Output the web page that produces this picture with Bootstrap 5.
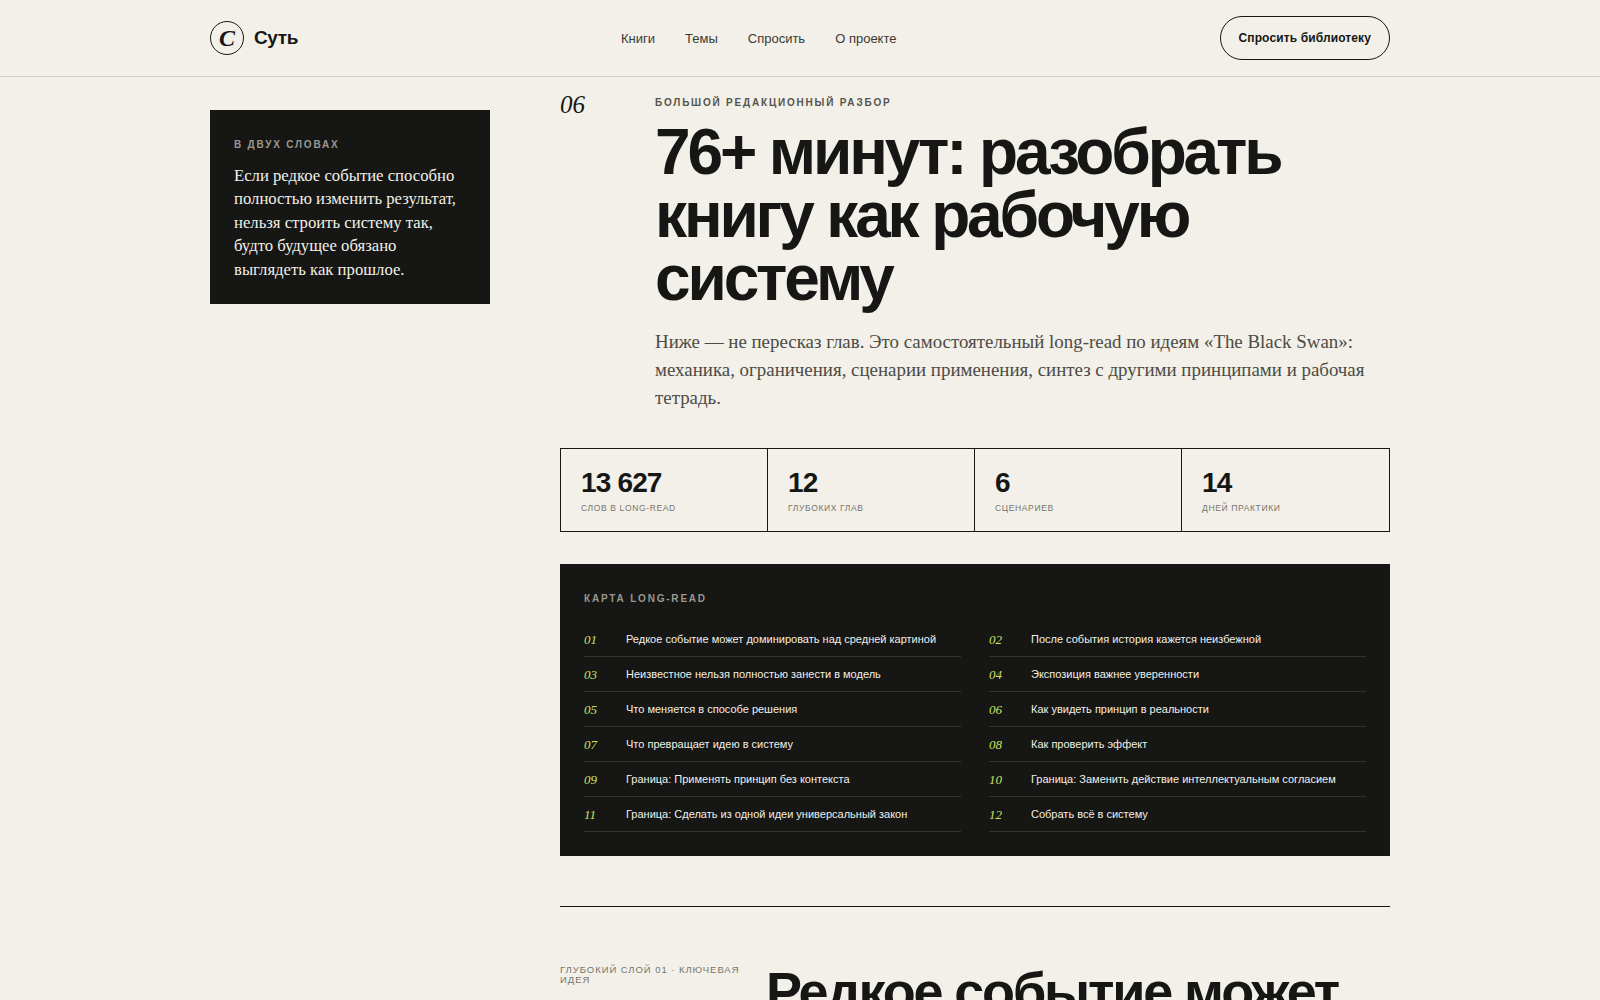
<!DOCTYPE html>
<html lang="ru">

<head>
    <meta charset="UTF-8">
    <title>Суть</title>
    <link href="https://cdn.jsdelivr.net/npm/bootstrap@5.3.0/dist/css/bootstrap.min.css" rel="stylesheet">
    <style>
        html, body { height: 1000px; overflow: hidden; }
        body { background: #f2f0e8; color: #161614; font-family: "Liberation Sans", Arial, sans-serif; }
        .wrap { width: 1180px; margin: 0 auto; }
        .site-head { height: 77px; border-bottom: 1px solid #cfccc4; }
        .logo-mark { width: 34px; height: 34px; border: 1px solid #161614; border-radius: 50%; font: italic 700 24px/30px "Liberation Serif", serif; }
        .logo-name { font-size: 19px; font-weight: 700; letter-spacing: -.02em; margin-left: 2px; }
        .head-links { gap: 30px; margin-left: 323px; padding-top: 1px; }
        .head-links a { font-size: 13px; color: #3b3a35; text-decoration: none; }
        .ask-btn { height: 44px; padding: 0 18px; border: 1px solid #161614; border-radius: 22px; font-size: 12px; font-weight: 700; color: #161614; letter-spacing: .01em; }
        .page-cols { gap: 70px; }
        .side-col { width: 280px; flex: none; padding-top: 33px; }
        .brief-box { background: #161614; color: #f2f0e8; padding: 25px 24px 0; height: 194px; }
        .brief-label { font-size: 10px; font-weight: 700; letter-spacing: .18em; color: #9a988f; line-height: 20px; margin-bottom: 9px; }
        .brief-text { font: 16.7px/23.4px "Liberation Serif", serif; margin: 0; }
        .main-col { width: 830px; flex: none; padding-top: 17px; }
        .chap-num { width: 95px; flex: none; font: italic 400 25px/22px "Liberation Serif", serif; }
        .chap-kicker { font-size: 10px; font-weight: 700; letter-spacing: .18em; color: #57554e; line-height: 18px; }
        .chap-title { font-size: 64px; font-weight: 700; letter-spacing: -.049em; line-height: 63px; margin: 9px 0 0; }
        .chap-lead { font: 18.9px/28px "Liberation Serif", serif; color: #4d4b45; margin: 18px 0 0; }
        .stat-row { border: 1px solid #161614; height: 84px; margin-top: 36px; display: grid; grid-template-columns: repeat(4, 1fr); }
        .stat-cell { padding: 20px 20px 0; border-right: 1px solid #161614; }
        .stat-cell:last-child { border-right: 0; }
        .stat-num { font-size: 28px; font-weight: 700; letter-spacing: -.03em; line-height: 28px; }
        .stat-label { font-size: 8.5px; letter-spacing: .075em; color: #77756c; text-transform: uppercase; line-height: 12px; margin-top: 5px; }
        .map-box { background: #161614; color: #f2f0e8; padding: 25px 24px 0; height: 292px; margin-top: 32px; }
        .map-label { font-size: 10px; font-weight: 700; letter-spacing: .18em; color: #9a988f; line-height: 20px; margin-bottom: 13px; }
        .map-grid { display: grid; grid-template-columns: 1fr 1fr; column-gap: 28px; }
        .map-row { height: 35px; padding-top: 1px; border-bottom: 1px solid #34342f; font-size: 11px; }
        .map-num { width: 42px; flex: none; font: italic 13px/13px "Liberation Serif", serif; color: #c9e265; }
        .sect-rule { height: 1px; background: #161614; margin-top: 50px; }
        .deep-row { margin-top: 57px; gap: 26px; }
        .deep-label { width: 180px; flex: none; font-size: 9.5px; letter-spacing: .1em; line-height: 10px; color: #77756c; padding-top: 1px; }
        .deep-title { font-size: 54px; font-weight: 700; letter-spacing: -.04em; line-height: 54px; margin: 0; white-space: nowrap; }
    </style>
</head>

<body>
    <header class="site-head">
        <div class="wrap h-100 d-flex align-items-center">
            <div class="d-flex align-items-center gap-2">
                <span class="logo-mark d-flex align-items-center justify-content-center">C</span>
                <span class="logo-name">Суть</span>
            </div>
            <nav class="head-links d-flex">
                <a href="#">Книги</a>
                <a href="#">Темы</a>
                <a href="#">Спросить</a>
                <a href="#">О проекте</a>
            </nav>
            <div class="ask-btn d-flex align-items-center ms-auto">Спросить библиотеку</div>
        </div>
    </header>

    <div class="wrap d-flex page-cols">
        <aside class="side-col">
            <div class="brief-box">
                <div class="brief-label">В ДВУХ СЛОВАХ</div>
                <p class="brief-text">Если редкое событие способно полностью изменить результат, нельзя строить систему так, будто будущее обязано выглядеть как прошлое.</p>
            </div>
        </aside>

        <main class="main-col">
            <div class="d-flex">
                <div class="chap-num">06</div>
                <div>
                    <div class="chap-kicker">БОЛЬШОЙ РЕДАКЦИОННЫЙ РАЗБОР</div>
                    <h1 class="chap-title">76+ минут: разобрать книгу как рабочую систему</h1>
                    <p class="chap-lead">Ниже — не пересказ глав. Это самостоятельный long-read по идеям «The Black Swan»: механика, ограничения, сценарии применения, синтез с другими принципами и рабочая тетрадь.</p>
                </div>
            </div>

            <div class="stat-row">
                <div class="stat-cell"><div class="stat-num">13 627</div><div class="stat-label">Слов в long-read</div></div>
                <div class="stat-cell"><div class="stat-num">12</div><div class="stat-label">Глубоких глав</div></div>
                <div class="stat-cell"><div class="stat-num">6</div><div class="stat-label">Сценариев</div></div>
                <div class="stat-cell"><div class="stat-num">14</div><div class="stat-label">Дней практики</div></div>
            </div>

            <section class="map-box">
                <div class="map-label">КАРТА LONG-READ</div>
                <div class="map-grid">
                    <div class="map-row d-flex align-items-center"><span class="map-num">01</span>Редкое событие может доминировать над средней картиной</div>
                    <div class="map-row d-flex align-items-center"><span class="map-num">02</span>После события история кажется неизбежной</div>
                    <div class="map-row d-flex align-items-center"><span class="map-num">03</span>Неизвестное нельзя полностью занести в модель</div>
                    <div class="map-row d-flex align-items-center"><span class="map-num">04</span>Экспозиция важнее уверенности</div>
                    <div class="map-row d-flex align-items-center"><span class="map-num">05</span>Что меняется в способе решения</div>
                    <div class="map-row d-flex align-items-center"><span class="map-num">06</span>Как увидеть принцип в реальности</div>
                    <div class="map-row d-flex align-items-center"><span class="map-num">07</span>Что превращает идею в систему</div>
                    <div class="map-row d-flex align-items-center"><span class="map-num">08</span>Как проверить эффект</div>
                    <div class="map-row d-flex align-items-center"><span class="map-num">09</span>Граница: Применять принцип без контекста</div>
                    <div class="map-row d-flex align-items-center"><span class="map-num">10</span>Граница: Заменить действие интеллектуальным согласием</div>
                    <div class="map-row d-flex align-items-center"><span class="map-num">11</span>Граница: Сделать из одной идеи универсальный закон</div>
                    <div class="map-row d-flex align-items-center"><span class="map-num">12</span>Собрать всё в систему</div>
                </div>
            </section>

            <div class="sect-rule"></div>

            <div class="deep-row d-flex">
                <div class="deep-label">ГЛУБОКИЙ СЛОЙ 01 · КЛЮЧЕВАЯ ИДЕЯ</div>
                <h2 class="deep-title">Редкое событие может</h2>
            </div>
        </main>
    </div>

    <script src="https://cdn.jsdelivr.net/npm/bootstrap@5.3.0/dist/js/bootstrap.bundle.min.js"></script>
</body>

</html>
